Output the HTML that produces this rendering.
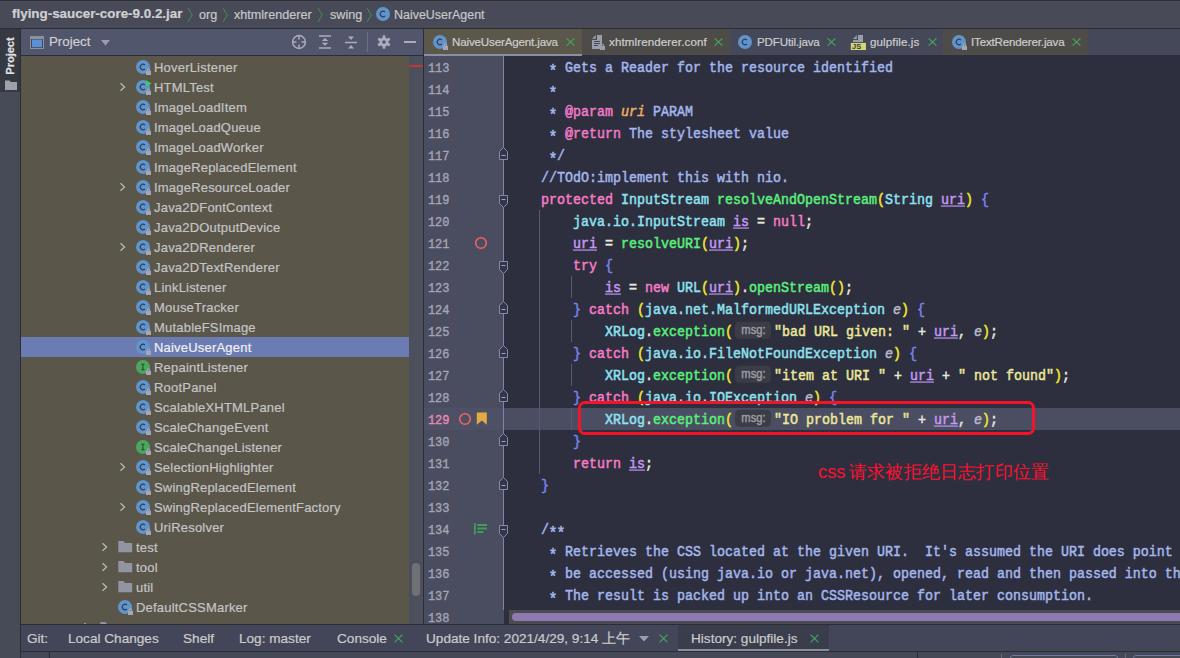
<!DOCTYPE html><html><head><meta charset="utf-8"><style>
*{margin:0;padding:0;box-sizing:border-box}
html,body{width:1180px;height:658px;overflow:hidden;background:#2d2f3e;font-family:"Liberation Sans", sans-serif}
.a{position:absolute}
.t{position:absolute;white-space:pre;font-family:"Liberation Sans", sans-serif;color:#c4c4c6;-webkit-text-stroke:0.2px currentColor}
.code{position:absolute;left:509px;white-space:pre;font-family:"Liberation Mono", monospace;font-size:13.33px;line-height:22px;height:22px;color:#a4b6ec;transform:translateY(2.5px) scaleY(1.13);transform-origin:0 15px;-webkit-text-stroke:0.45px currentColor}
.ln{position:absolute;left:424px;width:25.5px;text-align:right;white-space:pre;font-family:"Liberation Mono", monospace;font-size:12px;line-height:22px;color:#a3a5b4;-webkit-text-stroke:0.35px currentColor;transform:translateY(2.4px) scaleY(1.14);transform-origin:0 15px}
.kw{color:#f97cc6} .ty{color:#8ee2f0} .fn{color:#5aef7c} .pr{color:#f0e82a} .br{color:#7b84ee}
.va{color:#c59af5;text-decoration:underline;text-decoration-thickness:1px;text-underline-offset:1px}
.op{color:#e6e6dc} .st{color:#ece89a} .pe{color:#b8b8cc;font-style:italic} .cm{color:#a4b6ec}
.tg{color:#f27ac6} .as{display:inline-block;width:8px;transform:translateY(2.6px) scale(1.12);transform-origin:50% 8px} .dp{color:#f0b060;font-style:italic}
.hint{display:inline-block;position:relative;width:41px;height:22px;vertical-align:top}
.hint i{position:absolute;left:2.5px;top:0.6px;width:36px;height:15.6px;border-radius:4px;background:#3b3d46;color:#9a9aa0;font-style:normal;font-family:"Liberation Sans", sans-serif;font-size:11.2px;line-height:15.6px;text-align:center}
.x{position:absolute}
</style></head><body>

<div class="a" style="left:0;top:0;width:1180px;height:28px;background:#484b57"></div>
<div class="a" style="left:0;top:0;width:1180px;height:1px;background:#2e3038"></div>
<div class="t" style="left:12px;top:5px;font-size:13.4px;font-weight:bold;letter-spacing:0px;line-height:18px;color:#cfd0d2">flying-saucer-core-9.0.2.jar</div>
<svg style="position:absolute;left:187px;top:7px" width="7" height="16" viewBox="0 0 7 16"><path d="M1 1L5.2 8L1 15" stroke="#3b9150" stroke-width="0.95" fill="none"/></svg>
<div class="t" style="left:199px;top:6px;font-size:12.6px;line-height:18px;color:#c6c7ca">org</div>
<svg style="position:absolute;left:222px;top:7px" width="7" height="16" viewBox="0 0 7 16"><path d="M1 1L5.2 8L1 15" stroke="#3b9150" stroke-width="0.95" fill="none"/></svg>
<div class="t" style="left:234px;top:6px;font-size:12.6px;line-height:18px;color:#c6c7ca">xhtmlrenderer</div>
<svg style="position:absolute;left:317px;top:7px" width="7" height="16" viewBox="0 0 7 16"><path d="M1 1L5.2 8L1 15" stroke="#3b9150" stroke-width="0.95" fill="none"/></svg>
<div class="t" style="left:330px;top:6px;font-size:12.6px;line-height:18px;color:#c6c7ca">swing</div>
<svg style="position:absolute;left:366px;top:7px" width="7" height="16" viewBox="0 0 7 16"><path d="M1 1L5.2 8L1 15" stroke="#3b9150" stroke-width="0.95" fill="none"/></svg>
<svg style="position:absolute;left:376px;top:7px" width="14" height="14" viewBox="0 0 14 14"><circle cx="7" cy="7" r="7" fill="#6094cb"/><path d="M8.9 5.0A2.75 2.75 0 1 0 8.9 9.0" stroke="#323d57" stroke-width="1.15" fill="none"/></svg>
<div class="t" style="left:394px;top:6px;font-size:12.45px;line-height:18px;color:#c6c7ca">NaiveUserAgent</div>
<div class="a" style="left:0;top:28px;width:20px;height:630px;background:#474b57"></div>
<div class="a" style="left:0;top:28px;width:20px;height:64px;background:#363941"></div>
<div class="t" style="left:-16px;top:49px;width:52px;height:14px;font-size:11.2px;font-weight:bold;letter-spacing:-0.1px;line-height:14px;color:#e2e2e4;transform:rotate(-90deg);text-align:center">Project</div>
<svg style="position:absolute;left:5px;top:80px" width="12" height="10" viewBox="0 0 12 10"><path d="M0 0.5h4.5l1.3 1.6h6.2v7.9h-12z" fill="#9ea1aa"/></svg>
<div class="a" style="left:21px;top:28px;width:402px;height:27px;background:#52566d"></div>
<div class="a" style="left:21px;top:55px;width:402px;height:1px;background:#2b2d35"></div>
<svg style="position:absolute;left:30px;top:36px" width="14" height="13" viewBox="0 0 14 13"><rect x="0.5" y="0.5" width="13" height="12" fill="#454857" stroke="#8d909c" stroke-width="1"/><rect x="0.5" y="0.5" width="13" height="2.6" fill="#8d909c"/><rect x="2" y="3.6" width="10" height="7.6" fill="#5a8fd3"/></svg>
<div class="t" style="left:49px;top:33px;font-size:13.3px;line-height:18px;color:#cfd0d4">Project</div>
<svg style="position:absolute;left:101px;top:40px" width="9" height="6" viewBox="0 0 9 6"><path d="M0 0h9L4.5 5.5z" fill="#9a9db0"/></svg>
<svg style="position:absolute;left:291px;top:34px" width="16" height="16" viewBox="0 0 16 16"><circle cx="8" cy="8" r="6.4" stroke="#a9acb9" stroke-width="1.5" fill="none"/><path d="M8 1v4.5M8 10.5V15M1 8h4.5M10.5 8H15" stroke="#a9acb9" stroke-width="1.5"/></svg>
<svg style="position:absolute;left:318px;top:35px" width="14" height="15" viewBox="0 0 14 15"><path d="M1 1h12M1 13h12" stroke="#a9acb9" stroke-width="1.5"/><path d="M3.8 5.9L7 2.9L10.2 5.9zM3.8 7.7L7 10.7L10.2 7.7z" fill="#a9acb9"/></svg>
<svg style="position:absolute;left:344px;top:35px" width="14" height="15" viewBox="0 0 14 15"><path d="M1 7.5h12" stroke="#a9acb9" stroke-width="1.5"/><path d="M4 1.5L7 5L10 1.5zM4 13.5L7 10L10 13.5z" fill="#a9acb9"/></svg>
<div class="a" style="left:367px;top:32px;width:1px;height:20px;background:#6b6f82"></div>
<svg style="position:absolute;left:377px;top:35px" width="14" height="14" viewBox="0 0 14 14"><g fill="#a9acb9"><circle cx="7" cy="7" r="4.6"/><rect x="5.6" y="0.3" width="2.8" height="13.4" rx="0.6"/><rect x="5.6" y="0.3" width="2.8" height="13.4" rx="0.6" transform="rotate(60 7 7)"/><rect x="5.6" y="0.3" width="2.8" height="13.4" rx="0.6" transform="rotate(120 7 7)"/></g><circle cx="7" cy="7" r="1.8" fill="#52566d"/></svg>
<div class="a" style="left:404px;top:41px;width:12px;height:2px;background:#a9acb9"></div>
<div class="a" style="left:21px;top:56px;width:388px;height:568px;background:#5a5649"></div>
<div class="a" style="left:409px;top:56px;width:14px;height:568px;background:#4c505c"></div>
<div class="a" style="left:409px;top:65px;width:14px;height:2px;background:#c8342f"></div>
<div class="a" style="left:412px;top:563px;width:8px;height:33px;border-radius:4px;background:#6f7177"></div>
<svg style="position:absolute;left:136px;top:60px" width="17" height="17" viewBox="0 0 17 17"><circle cx="7" cy="7" r="7" fill="#6094cb"/><path d="M8.9 5.0A2.75 2.75 0 1 0 8.9 9.0" stroke="#323d57" stroke-width="1.15" fill="none"/><path d="M11.3 11.2v-1.3a1.2 1.2 0 0 1 2.4 0v1.3" stroke="#a4a6b2" stroke-width="1.1" fill="none"/><rect x="10" y="11" width="5" height="4" fill="#a4a6b2"/></svg>
<div class="t" style="left:154px;top:59px;font-size:13px;letter-spacing:0.2px;line-height:18px;color:#c4c4c6">HoverListener</div>
<svg style="position:absolute;left:119px;top:82px" width="8" height="10" viewBox="0 0 8 10"><path d="M1.5 1.2L5.6 5L1.5 8.8" stroke="#b9bbc0" stroke-width="1.2" fill="none"/></svg>
<svg style="position:absolute;left:136px;top:80px" width="17" height="17" viewBox="0 0 17 17"><circle cx="7" cy="7" r="7" fill="#6094cb"/><path d="M8.9 5.0A2.75 2.75 0 1 0 8.9 9.0" stroke="#323d57" stroke-width="1.15" fill="none"/><path d="M11.3 11.2v-1.3a1.2 1.2 0 0 1 2.4 0v1.3" stroke="#a4a6b2" stroke-width="1.1" fill="none"/><rect x="10" y="11" width="5" height="4" fill="#a4a6b2"/><path d="M10 0.3L15.5 3.4L10 6.5Z" fill="#3fcf5a"/></svg>
<div class="t" style="left:154px;top:79px;font-size:13px;letter-spacing:0.2px;line-height:18px;color:#c4c4c6">HTMLTest</div>
<svg style="position:absolute;left:136px;top:100px" width="17" height="17" viewBox="0 0 17 17"><circle cx="7" cy="7" r="7" fill="#6094cb"/><path d="M8.9 5.0A2.75 2.75 0 1 0 8.9 9.0" stroke="#323d57" stroke-width="1.15" fill="none"/><path d="M11.3 11.2v-1.3a1.2 1.2 0 0 1 2.4 0v1.3" stroke="#a4a6b2" stroke-width="1.1" fill="none"/><rect x="10" y="11" width="5" height="4" fill="#a4a6b2"/></svg>
<div class="t" style="left:154px;top:99px;font-size:13px;letter-spacing:0.2px;line-height:18px;color:#c4c4c6">ImageLoadItem</div>
<svg style="position:absolute;left:136px;top:120px" width="17" height="17" viewBox="0 0 17 17"><circle cx="7" cy="7" r="7" fill="#6094cb"/><path d="M8.9 5.0A2.75 2.75 0 1 0 8.9 9.0" stroke="#323d57" stroke-width="1.15" fill="none"/><path d="M11.3 11.2v-1.3a1.2 1.2 0 0 1 2.4 0v1.3" stroke="#a4a6b2" stroke-width="1.1" fill="none"/><rect x="10" y="11" width="5" height="4" fill="#a4a6b2"/></svg>
<div class="t" style="left:154px;top:119px;font-size:13px;letter-spacing:0.2px;line-height:18px;color:#c4c4c6">ImageLoadQueue</div>
<svg style="position:absolute;left:136px;top:140px" width="17" height="17" viewBox="0 0 17 17"><circle cx="7" cy="7" r="7" fill="#6094cb"/><path d="M8.9 5.0A2.75 2.75 0 1 0 8.9 9.0" stroke="#323d57" stroke-width="1.15" fill="none"/><path d="M11.3 11.2v-1.3a1.2 1.2 0 0 1 2.4 0v1.3" stroke="#a4a6b2" stroke-width="1.1" fill="none"/><rect x="10" y="11" width="5" height="4" fill="#a4a6b2"/></svg>
<div class="t" style="left:154px;top:139px;font-size:13px;letter-spacing:0.2px;line-height:18px;color:#c4c4c6">ImageLoadWorker</div>
<svg style="position:absolute;left:136px;top:160px" width="17" height="17" viewBox="0 0 17 17"><circle cx="7" cy="7" r="7" fill="#6094cb"/><path d="M8.9 5.0A2.75 2.75 0 1 0 8.9 9.0" stroke="#323d57" stroke-width="1.15" fill="none"/><path d="M11.3 11.2v-1.3a1.2 1.2 0 0 1 2.4 0v1.3" stroke="#a4a6b2" stroke-width="1.1" fill="none"/><rect x="10" y="11" width="5" height="4" fill="#a4a6b2"/></svg>
<div class="t" style="left:154px;top:159px;font-size:13px;letter-spacing:0.2px;line-height:18px;color:#c4c4c6">ImageReplacedElement</div>
<svg style="position:absolute;left:119px;top:182px" width="8" height="10" viewBox="0 0 8 10"><path d="M1.5 1.2L5.6 5L1.5 8.8" stroke="#b9bbc0" stroke-width="1.2" fill="none"/></svg>
<svg style="position:absolute;left:136px;top:180px" width="17" height="17" viewBox="0 0 17 17"><circle cx="7" cy="7" r="7" fill="#6094cb"/><path d="M8.9 5.0A2.75 2.75 0 1 0 8.9 9.0" stroke="#323d57" stroke-width="1.15" fill="none"/><path d="M11.3 11.2v-1.3a1.2 1.2 0 0 1 2.4 0v1.3" stroke="#a4a6b2" stroke-width="1.1" fill="none"/><rect x="10" y="11" width="5" height="4" fill="#a4a6b2"/></svg>
<div class="t" style="left:154px;top:179px;font-size:13px;letter-spacing:0.2px;line-height:18px;color:#c4c4c6">ImageResourceLoader</div>
<svg style="position:absolute;left:136px;top:200px" width="17" height="17" viewBox="0 0 17 17"><circle cx="7" cy="7" r="7" fill="#6094cb"/><path d="M8.9 5.0A2.75 2.75 0 1 0 8.9 9.0" stroke="#323d57" stroke-width="1.15" fill="none"/><path d="M11.3 11.2v-1.3a1.2 1.2 0 0 1 2.4 0v1.3" stroke="#a4a6b2" stroke-width="1.1" fill="none"/><rect x="10" y="11" width="5" height="4" fill="#a4a6b2"/></svg>
<div class="t" style="left:154px;top:199px;font-size:13px;letter-spacing:0.2px;line-height:18px;color:#c4c4c6">Java2DFontContext</div>
<svg style="position:absolute;left:136px;top:220px" width="17" height="17" viewBox="0 0 17 17"><circle cx="7" cy="7" r="7" fill="#6094cb"/><path d="M8.9 5.0A2.75 2.75 0 1 0 8.9 9.0" stroke="#323d57" stroke-width="1.15" fill="none"/><path d="M11.3 11.2v-1.3a1.2 1.2 0 0 1 2.4 0v1.3" stroke="#a4a6b2" stroke-width="1.1" fill="none"/><rect x="10" y="11" width="5" height="4" fill="#a4a6b2"/></svg>
<div class="t" style="left:154px;top:219px;font-size:13px;letter-spacing:0.2px;line-height:18px;color:#c4c4c6">Java2DOutputDevice</div>
<svg style="position:absolute;left:119px;top:242px" width="8" height="10" viewBox="0 0 8 10"><path d="M1.5 1.2L5.6 5L1.5 8.8" stroke="#b9bbc0" stroke-width="1.2" fill="none"/></svg>
<svg style="position:absolute;left:136px;top:240px" width="17" height="17" viewBox="0 0 17 17"><circle cx="7" cy="7" r="7" fill="#6094cb"/><path d="M8.9 5.0A2.75 2.75 0 1 0 8.9 9.0" stroke="#323d57" stroke-width="1.15" fill="none"/><path d="M11.3 11.2v-1.3a1.2 1.2 0 0 1 2.4 0v1.3" stroke="#a4a6b2" stroke-width="1.1" fill="none"/><rect x="10" y="11" width="5" height="4" fill="#a4a6b2"/></svg>
<div class="t" style="left:154px;top:239px;font-size:13px;letter-spacing:0.2px;line-height:18px;color:#c4c4c6">Java2DRenderer</div>
<svg style="position:absolute;left:136px;top:260px" width="17" height="17" viewBox="0 0 17 17"><circle cx="7" cy="7" r="7" fill="#6094cb"/><path d="M8.9 5.0A2.75 2.75 0 1 0 8.9 9.0" stroke="#323d57" stroke-width="1.15" fill="none"/><path d="M11.3 11.2v-1.3a1.2 1.2 0 0 1 2.4 0v1.3" stroke="#a4a6b2" stroke-width="1.1" fill="none"/><rect x="10" y="11" width="5" height="4" fill="#a4a6b2"/></svg>
<div class="t" style="left:154px;top:259px;font-size:13px;letter-spacing:0.2px;line-height:18px;color:#c4c4c6">Java2DTextRenderer</div>
<svg style="position:absolute;left:136px;top:280px" width="17" height="17" viewBox="0 0 17 17"><circle cx="7" cy="7" r="7" fill="#6094cb"/><path d="M8.9 5.0A2.75 2.75 0 1 0 8.9 9.0" stroke="#323d57" stroke-width="1.15" fill="none"/><path d="M11.3 11.2v-1.3a1.2 1.2 0 0 1 2.4 0v1.3" stroke="#a4a6b2" stroke-width="1.1" fill="none"/><rect x="10" y="11" width="5" height="4" fill="#a4a6b2"/></svg>
<div class="t" style="left:154px;top:279px;font-size:13px;letter-spacing:0.2px;line-height:18px;color:#c4c4c6">LinkListener</div>
<svg style="position:absolute;left:136px;top:300px" width="17" height="17" viewBox="0 0 17 17"><circle cx="7" cy="7" r="7" fill="#6094cb"/><path d="M8.9 5.0A2.75 2.75 0 1 0 8.9 9.0" stroke="#323d57" stroke-width="1.15" fill="none"/><path d="M11.3 11.2v-1.3a1.2 1.2 0 0 1 2.4 0v1.3" stroke="#a4a6b2" stroke-width="1.1" fill="none"/><rect x="10" y="11" width="5" height="4" fill="#a4a6b2"/></svg>
<div class="t" style="left:154px;top:299px;font-size:13px;letter-spacing:0.2px;line-height:18px;color:#c4c4c6">MouseTracker</div>
<svg style="position:absolute;left:136px;top:320px" width="17" height="17" viewBox="0 0 17 17"><circle cx="7" cy="7" r="7" fill="#6094cb"/><path d="M8.9 5.0A2.75 2.75 0 1 0 8.9 9.0" stroke="#323d57" stroke-width="1.15" fill="none"/><path d="M11.3 11.2v-1.3a1.2 1.2 0 0 1 2.4 0v1.3" stroke="#a4a6b2" stroke-width="1.1" fill="none"/><rect x="10" y="11" width="5" height="4" fill="#a4a6b2"/></svg>
<div class="t" style="left:154px;top:319px;font-size:13px;letter-spacing:0.2px;line-height:18px;color:#c4c4c6">MutableFSImage</div>
<div class="a" style="left:21px;top:337px;width:388px;height:20px;background:#6b7cb3"></div>
<svg style="position:absolute;left:136px;top:340px" width="17" height="17" viewBox="0 0 17 17"><circle cx="7" cy="7" r="7" fill="#6094cb"/><path d="M8.9 5.0A2.75 2.75 0 1 0 8.9 9.0" stroke="#323d57" stroke-width="1.15" fill="none"/><path d="M11.3 11.2v-1.3a1.2 1.2 0 0 1 2.4 0v1.3" stroke="#a4a6b2" stroke-width="1.1" fill="none"/><rect x="10" y="11" width="5" height="4" fill="#a4a6b2"/></svg>
<div class="t" style="left:154px;top:339px;font-size:13px;letter-spacing:0.2px;line-height:18px;color:#f0f0f2">NaiveUserAgent</div>
<svg style="position:absolute;left:136px;top:360px" width="17" height="17" viewBox="0 0 17 17"><circle cx="7" cy="7" r="7" fill="#4da65e"/><path d="M5.3 4.3h3.2M6.9 4.3v5.4M5.3 9.7h3.2" stroke="#2c4a33" stroke-width="1.1" fill="none"/><path d="M11.3 11.2v-1.3a1.2 1.2 0 0 1 2.4 0v1.3" stroke="#a4a6b2" stroke-width="1.1" fill="none"/><rect x="10" y="11" width="5" height="4" fill="#a4a6b2"/></svg>
<div class="t" style="left:154px;top:359px;font-size:13px;letter-spacing:0.2px;line-height:18px;color:#c4c4c6">RepaintListener</div>
<svg style="position:absolute;left:136px;top:380px" width="17" height="17" viewBox="0 0 17 17"><circle cx="7" cy="7" r="7" fill="#6094cb"/><path d="M8.9 5.0A2.75 2.75 0 1 0 8.9 9.0" stroke="#323d57" stroke-width="1.15" fill="none"/><path d="M11.3 11.2v-1.3a1.2 1.2 0 0 1 2.4 0v1.3" stroke="#a4a6b2" stroke-width="1.1" fill="none"/><rect x="10" y="11" width="5" height="4" fill="#a4a6b2"/></svg>
<div class="t" style="left:154px;top:379px;font-size:13px;letter-spacing:0.2px;line-height:18px;color:#c4c4c6">RootPanel</div>
<svg style="position:absolute;left:136px;top:400px" width="17" height="17" viewBox="0 0 17 17"><circle cx="7" cy="7" r="7" fill="#6094cb"/><path d="M8.9 5.0A2.75 2.75 0 1 0 8.9 9.0" stroke="#323d57" stroke-width="1.15" fill="none"/><path d="M11.3 11.2v-1.3a1.2 1.2 0 0 1 2.4 0v1.3" stroke="#a4a6b2" stroke-width="1.1" fill="none"/><rect x="10" y="11" width="5" height="4" fill="#a4a6b2"/></svg>
<div class="t" style="left:154px;top:399px;font-size:13px;letter-spacing:0.2px;line-height:18px;color:#c4c4c6">ScalableXHTMLPanel</div>
<svg style="position:absolute;left:136px;top:420px" width="17" height="17" viewBox="0 0 17 17"><circle cx="7" cy="7" r="7" fill="#6094cb"/><path d="M8.9 5.0A2.75 2.75 0 1 0 8.9 9.0" stroke="#323d57" stroke-width="1.15" fill="none"/><path d="M11.3 11.2v-1.3a1.2 1.2 0 0 1 2.4 0v1.3" stroke="#a4a6b2" stroke-width="1.1" fill="none"/><rect x="10" y="11" width="5" height="4" fill="#a4a6b2"/></svg>
<div class="t" style="left:154px;top:419px;font-size:13px;letter-spacing:0.2px;line-height:18px;color:#c4c4c6">ScaleChangeEvent</div>
<svg style="position:absolute;left:136px;top:440px" width="17" height="17" viewBox="0 0 17 17"><circle cx="7" cy="7" r="7" fill="#4da65e"/><path d="M5.3 4.3h3.2M6.9 4.3v5.4M5.3 9.7h3.2" stroke="#2c4a33" stroke-width="1.1" fill="none"/><path d="M11.3 11.2v-1.3a1.2 1.2 0 0 1 2.4 0v1.3" stroke="#a4a6b2" stroke-width="1.1" fill="none"/><rect x="10" y="11" width="5" height="4" fill="#a4a6b2"/></svg>
<div class="t" style="left:154px;top:439px;font-size:13px;letter-spacing:0.2px;line-height:18px;color:#c4c4c6">ScaleChangeListener</div>
<svg style="position:absolute;left:119px;top:462px" width="8" height="10" viewBox="0 0 8 10"><path d="M1.5 1.2L5.6 5L1.5 8.8" stroke="#b9bbc0" stroke-width="1.2" fill="none"/></svg>
<svg style="position:absolute;left:136px;top:460px" width="17" height="17" viewBox="0 0 17 17"><circle cx="7" cy="7" r="7" fill="#6094cb"/><path d="M8.9 5.0A2.75 2.75 0 1 0 8.9 9.0" stroke="#323d57" stroke-width="1.15" fill="none"/><path d="M11.3 11.2v-1.3a1.2 1.2 0 0 1 2.4 0v1.3" stroke="#a4a6b2" stroke-width="1.1" fill="none"/><rect x="10" y="11" width="5" height="4" fill="#a4a6b2"/></svg>
<div class="t" style="left:154px;top:459px;font-size:13px;letter-spacing:0.2px;line-height:18px;color:#c4c4c6">SelectionHighlighter</div>
<svg style="position:absolute;left:136px;top:480px" width="17" height="17" viewBox="0 0 17 17"><circle cx="7" cy="7" r="7" fill="#6094cb"/><path d="M8.9 5.0A2.75 2.75 0 1 0 8.9 9.0" stroke="#323d57" stroke-width="1.15" fill="none"/><path d="M11.3 11.2v-1.3a1.2 1.2 0 0 1 2.4 0v1.3" stroke="#a4a6b2" stroke-width="1.1" fill="none"/><rect x="10" y="11" width="5" height="4" fill="#a4a6b2"/></svg>
<div class="t" style="left:154px;top:479px;font-size:13px;letter-spacing:0.2px;line-height:18px;color:#c4c4c6">SwingReplacedElement</div>
<svg style="position:absolute;left:119px;top:502px" width="8" height="10" viewBox="0 0 8 10"><path d="M1.5 1.2L5.6 5L1.5 8.8" stroke="#b9bbc0" stroke-width="1.2" fill="none"/></svg>
<svg style="position:absolute;left:136px;top:500px" width="17" height="17" viewBox="0 0 17 17"><circle cx="7" cy="7" r="7" fill="#6094cb"/><path d="M8.9 5.0A2.75 2.75 0 1 0 8.9 9.0" stroke="#323d57" stroke-width="1.15" fill="none"/><path d="M11.3 11.2v-1.3a1.2 1.2 0 0 1 2.4 0v1.3" stroke="#a4a6b2" stroke-width="1.1" fill="none"/><rect x="10" y="11" width="5" height="4" fill="#a4a6b2"/></svg>
<div class="t" style="left:154px;top:499px;font-size:13px;letter-spacing:0.2px;line-height:18px;color:#c4c4c6">SwingReplacedElementFactory</div>
<svg style="position:absolute;left:136px;top:520px" width="17" height="17" viewBox="0 0 17 17"><circle cx="7" cy="7" r="7" fill="#6094cb"/><path d="M8.9 5.0A2.75 2.75 0 1 0 8.9 9.0" stroke="#323d57" stroke-width="1.15" fill="none"/><path d="M11.3 11.2v-1.3a1.2 1.2 0 0 1 2.4 0v1.3" stroke="#a4a6b2" stroke-width="1.1" fill="none"/><rect x="10" y="11" width="5" height="4" fill="#a4a6b2"/></svg>
<div class="t" style="left:154px;top:519px;font-size:13px;letter-spacing:0.2px;line-height:18px;color:#c4c4c6">UriResolver</div>
<svg style="position:absolute;left:101px;top:542px" width="8" height="10" viewBox="0 0 8 10"><path d="M1.5 1.2L5.6 5L1.5 8.8" stroke="#b9bbc0" stroke-width="1.2" fill="none"/></svg>
<svg style="position:absolute;left:118px;top:540px" width="15" height="13" viewBox="0 0 15 13"><path d="M0.3 1h5.2l1.6 1.9h7.1v9.3H0.3z" fill="#9295a1"/></svg>
<div class="t" style="left:136px;top:539px;font-size:13px;letter-spacing:0.2px;line-height:18px">test</div>
<svg style="position:absolute;left:101px;top:562px" width="8" height="10" viewBox="0 0 8 10"><path d="M1.5 1.2L5.6 5L1.5 8.8" stroke="#b9bbc0" stroke-width="1.2" fill="none"/></svg>
<svg style="position:absolute;left:118px;top:560px" width="15" height="13" viewBox="0 0 15 13"><path d="M0.3 1h5.2l1.6 1.9h7.1v9.3H0.3z" fill="#9295a1"/></svg>
<div class="t" style="left:136px;top:559px;font-size:13px;letter-spacing:0.2px;line-height:18px">tool</div>
<svg style="position:absolute;left:101px;top:582px" width="8" height="10" viewBox="0 0 8 10"><path d="M1.5 1.2L5.6 5L1.5 8.8" stroke="#b9bbc0" stroke-width="1.2" fill="none"/></svg>
<svg style="position:absolute;left:118px;top:580px" width="15" height="13" viewBox="0 0 15 13"><path d="M0.3 1h5.2l1.6 1.9h7.1v9.3H0.3z" fill="#9295a1"/></svg>
<div class="t" style="left:136px;top:579px;font-size:13px;letter-spacing:0.2px;line-height:18px">util</div>
<svg style="position:absolute;left:118px;top:600px" width="17" height="17" viewBox="0 0 17 17"><circle cx="7" cy="7" r="7" fill="#6094cb"/><path d="M8.9 5.0A2.75 2.75 0 1 0 8.9 9.0" stroke="#323d57" stroke-width="1.15" fill="none"/><path d="M11.3 11.2v-1.3a1.2 1.2 0 0 1 2.4 0v1.3" stroke="#a4a6b2" stroke-width="1.1" fill="none"/><rect x="10" y="11" width="5" height="4" fill="#a4a6b2"/></svg>
<div class="t" style="left:136px;top:599px;font-size:13px;letter-spacing:0.2px;line-height:18px">DefaultCSSMarker</div>
<svg style="position:absolute;left:83px;top:622px" width="8" height="10" viewBox="0 0 8 10"><path d="M1.5 1.2L5.6 5L1.5 8.8" stroke="#b9bbc0" stroke-width="1.2" fill="none"/></svg>
<svg style="position:absolute;left:100px;top:621px" width="15" height="13" viewBox="0 0 15 13"><path d="M0.3 1h5.2l1.6 1.9h7.1v9.3H0.3z" fill="#9295a1"/></svg>
<div class="a" style="left:21px;top:624px;width:1159px;height:1px;background:#2b2d35"></div>
<div class="a" style="left:424px;top:28px;width:756px;height:27px;background:#454858"></div>
<div class="a" style="left:424px;top:28px;width:158px;height:27px;background:#5b574a"></div><svg style="position:absolute;left:433px;top:35px" width="17" height="17" viewBox="0 0 17 17"><circle cx="7" cy="7" r="7" fill="#6094cb"/><path d="M8.9 5.0A2.75 2.75 0 1 0 8.9 9.0" stroke="#323d57" stroke-width="1.15" fill="none"/><path d="M11.3 11.2v-1.3a1.2 1.2 0 0 1 2.4 0v1.3" stroke="#a4a6b2" stroke-width="1.1" fill="none"/><rect x="10" y="11" width="5" height="4" fill="#a4a6b2"/></svg><div class="t" style="left:452px;top:34px;font-size:11.6px;letter-spacing:-0.16px;line-height:16px;color:#cdcdcf">NaiveUserAgent.java</div><svg style="position:absolute;left:566px;top:38px" width="9" height="8" viewBox="0 0 9 8"><path d="M0.6 0.4L8.4 7.6M8.4 0.4L0.6 7.6" stroke="#46a35a" stroke-width="1.2"/></svg>
<div class="a" style="left:424px;top:54px;width:158px;height:2px;background:#8a8fa3"></div>
<div class="a" style="left:582px;top:28px;width:148px;height:27px;background:#4e4c49"></div><svg style="position:absolute;left:586px;top:30px" width="22" height="22" viewBox="0 0 22 22"><path d="M6 8.7L9.7 5V8.7Z" fill="#9a9eaa"/><path d="M11 5H16V19H6V10H11Z" fill="#9a9eaa"/><path d="M8 11.5h6M8 13.5h6M8 15.5h4" stroke="#454856" stroke-width="1"/><path d="M15.3 16.6v-1.2a1.2 1.2 0 0 1 2.4 0v1.2" stroke="#9a9eaa" stroke-width="1.1" fill="none"/><rect x="14" y="16" width="5" height="4" fill="#9a9eaa"/></svg><div class="t" style="left:609px;top:34px;font-size:11.6px;letter-spacing:0.1px;line-height:16px;color:#cdcdcf">xhtmlrenderer.conf</div><svg style="position:absolute;left:714px;top:38px" width="9" height="8" viewBox="0 0 9 8"><path d="M0.6 0.4L8.4 7.6M8.4 0.4L0.6 7.6" stroke="#46a35a" stroke-width="1.2"/></svg>
<svg style="position:absolute;left:738px;top:35px" width="17" height="17" viewBox="0 0 17 17"><circle cx="7" cy="7" r="7" fill="#6094cb"/><path d="M8.9 5.0A2.75 2.75 0 1 0 8.9 9.0" stroke="#323d57" stroke-width="1.15" fill="none"/></svg><div class="t" style="left:757px;top:34px;font-size:11.6px;letter-spacing:-0.15px;line-height:16px;color:#cdcdcf">PDFUtil.java</div><svg style="position:absolute;left:827px;top:38px" width="9" height="8" viewBox="0 0 9 8"><path d="M0.6 0.4L8.4 7.6M8.4 0.4L0.6 7.6" stroke="#46a35a" stroke-width="1.2"/></svg>
<svg style="position:absolute;left:846px;top:30px" width="22" height="22" viewBox="0 0 22 22"><path d="M7 9L10.8 5V9Z" fill="#9a9eaa"/><path d="M12 5H17V12H7V10H12Z" fill="#9a9eaa"/><rect x="4.8" y="12.9" width="15.2" height="7.1" fill="#d2d57a"/><text x="6" y="19.3" font-family="Liberation Sans" font-weight="bold" font-size="7.5" fill="#3b3c30">JS</text></svg><div class="t" style="left:870px;top:34px;font-size:11.6px;letter-spacing:0.1px;line-height:16px;color:#cdcdcf">gulpfile.js</div><svg style="position:absolute;left:928px;top:38px" width="9" height="8" viewBox="0 0 9 8"><path d="M0.6 0.4L8.4 7.6M8.4 0.4L0.6 7.6" stroke="#46a35a" stroke-width="1.2"/></svg>
<div class="a" style="left:943px;top:28px;width:145px;height:27px;background:#4e4c49"></div><svg style="position:absolute;left:952px;top:35px" width="17" height="17" viewBox="0 0 17 17"><circle cx="7" cy="7" r="7" fill="#6094cb"/><path d="M8.9 5.0A2.75 2.75 0 1 0 8.9 9.0" stroke="#323d57" stroke-width="1.15" fill="none"/><path d="M11.3 11.2v-1.3a1.2 1.2 0 0 1 2.4 0v1.3" stroke="#a4a6b2" stroke-width="1.1" fill="none"/><rect x="10" y="11" width="5" height="4" fill="#a4a6b2"/></svg><div class="t" style="left:971px;top:34px;font-size:11.6px;letter-spacing:-0.18px;line-height:16px;color:#cdcdcf">ITextRenderer.java</div><svg style="position:absolute;left:1072px;top:38px" width="9" height="8" viewBox="0 0 9 8"><path d="M0.6 0.4L8.4 7.6M8.4 0.4L0.6 7.6" stroke="#46a35a" stroke-width="1.2"/></svg>
<div class="a" style="left:424px;top:56px;width:80px;height:568px;background:#4a4c60"></div>
<div class="a" style="left:504px;top:56px;width:676px;height:568px;background:#2d2f3e"></div>
<div class="a" style="left:504px;top:408px;width:676px;height:22px;background:#4b4e62"></div>
<div class="a" style="left:424px;top:408px;width:80px;height:22px;background:#4e5166"></div>
<div class="a" style="left:503px;top:56px;width:1px;height:554px;background:#7d84a6"></div>
<div class="a" style="left:539px;top:210px;width:1px;height:264px;background:#565a72"></div>
<div class="a" style="left:571px;top:276px;width:1px;height:22px;background:#565a72"></div>
<div class="a" style="left:571px;top:320px;width:1px;height:22px;background:#565a72"></div>
<div class="a" style="left:571px;top:364px;width:1px;height:22px;background:#565a72"></div>
<div class="a" style="left:571px;top:408px;width:1px;height:22px;background:#565a72"></div>
<div class="ln" style="top:56px;">113</div>
<div class="code" style="top:56px"><span class="cm">     <span class="as">*</span> Gets a Reader for the resource identified</span></div>
<div class="ln" style="top:78px;">114</div>
<div class="code" style="top:78px"><span class="cm">     <span class="as">*</span></span></div>
<div class="ln" style="top:100px;">115</div>
<div class="code" style="top:100px"><span class="cm">     <span class="as">*</span> </span><span class="tg">@param</span><span class="cm"> </span><span class="dp">uri</span><span class="cm"> PARAM</span></div>
<div class="ln" style="top:122px;">116</div>
<div class="code" style="top:122px"><span class="cm">     <span class="as">*</span> </span><span class="tg">@return</span><span class="cm"> The stylesheet value</span></div>
<div class="ln" style="top:144px;">117</div>
<div class="code" style="top:144px"><span class="cm">     <span class="as">*</span>/</span></div>
<div class="ln" style="top:166px;">118</div>
<div class="code" style="top:166px"><span class="cm">    //TOdO:implement this with nio.</span></div>
<div class="ln" style="top:188px;">119</div>
<div class="code" style="top:188px">    <span class="kw">protected</span> <span class="ty">InputStream</span> <span class="fn">resolveAndOpenStream</span><span class="pr">(</span><span class="ty">String</span> <span class="va">uri</span><span class="pr">)</span> <span class="br">{</span></div>
<div class="ln" style="top:210px;">120</div>
<div class="code" style="top:210px">        <span class="ty">java.io.InputStream</span> <span class="va">is</span><span class="op"> = </span><span class="kw">null</span><span class="op">;</span></div>
<div class="ln" style="top:232px;">121</div>
<div class="code" style="top:232px">        <span class="va">uri</span><span class="op"> = </span><span class="fn">resolveURI</span><span class="pr">(</span><span class="va">uri</span><span class="pr">)</span><span class="op">;</span></div>
<div class="ln" style="top:254px;">122</div>
<div class="code" style="top:254px">        <span class="kw">try</span> <span class="br">{</span></div>
<div class="ln" style="top:276px;">123</div>
<div class="code" style="top:276px">            <span class="va">is</span><span class="op"> = </span><span class="kw">new</span> <span class="ty">URL</span><span class="pr">(</span><span class="va">uri</span><span class="pr">)</span><span class="op">.</span><span class="fn">openStream</span><span class="pr">()</span><span class="op">;</span></div>
<div class="ln" style="top:298px;">124</div>
<div class="code" style="top:298px">        <span class="br">}</span> <span class="kw">catch</span> <span class="pr">(</span><span class="ty">java.net.MalformedURLException</span> <span class="pe">e</span><span class="pr">)</span> <span class="br">{</span></div>
<div class="ln" style="top:320px;">125</div>
<div class="code" style="top:320px">            <span class="ty">XRLog</span><span class="op">.</span><span class="fn">exception</span><span class="pr">(</span><span class="hint"><i>msg:</i></span><span class="st">&quot;bad URL given: &quot;</span><span class="op"> + </span><span class="va">uri</span><span class="op">, </span><span class="pe">e</span><span class="pr">)</span><span class="op">;</span></div>
<div class="ln" style="top:342px;">126</div>
<div class="code" style="top:342px">        <span class="br">}</span> <span class="kw">catch</span> <span class="pr">(</span><span class="ty">java.io.FileNotFoundException</span> <span class="pe">e</span><span class="pr">)</span> <span class="br">{</span></div>
<div class="ln" style="top:364px;">127</div>
<div class="code" style="top:364px">            <span class="ty">XRLog</span><span class="op">.</span><span class="fn">exception</span><span class="pr">(</span><span class="hint"><i>msg:</i></span><span class="st">&quot;item at URI &quot;</span><span class="op"> + </span><span class="va">uri</span><span class="op"> + </span><span class="st">&quot; not found&quot;</span><span class="pr">)</span><span class="op">;</span></div>
<div class="ln" style="top:386px;">128</div>
<div class="code" style="top:386px">        <span class="br">}</span> <span class="kw">catch</span> <span class="pr">(</span><span class="ty">java.io.IOException</span> <span class="pe">e</span><span class="pr">)</span> <span class="br">{</span></div>
<div class="ln" style="top:408px;color:#e889b5;">129</div>
<div class="code" style="top:408px">            <span class="ty">XRLog</span><span class="op">.</span><span class="fn">exception</span><span class="pr">(</span><span class="hint"><i>msg:</i></span><span class="st">&quot;IO problem for &quot;</span><span class="op"> + </span><span class="va">uri</span><span class="op">, </span><span class="pe">e</span><span class="pr">)</span><span class="op">;</span></div>
<div class="ln" style="top:430px;">130</div>
<div class="code" style="top:430px">        <span class="br">}</span></div>
<div class="ln" style="top:452px;">131</div>
<div class="code" style="top:452px">        <span class="kw">return</span> <span class="va">is</span><span class="op">;</span></div>
<div class="ln" style="top:474px;">132</div>
<div class="code" style="top:474px">    <span class="br">}</span></div>
<div class="ln" style="top:496px;">133</div>
<div class="code" style="top:496px"></div>
<div class="ln" style="top:518px;">134</div>
<div class="code" style="top:518px"><span class="cm">    /<span class="as">*</span><span class="as">*</span></span></div>
<div class="ln" style="top:540px;">135</div>
<div class="code" style="top:540px"><span class="cm">     <span class="as">*</span> Retrieves the CSS located at the given URI.  It&#x27;s assumed the URI does point</span></div>
<div class="ln" style="top:562px;">136</div>
<div class="code" style="top:562px"><span class="cm">     <span class="as">*</span> be accessed (using java.io or java.net), opened, read and then passed into th</span></div>
<div class="ln" style="top:584px;">137</div>
<div class="code" style="top:584px"><span class="cm">     <span class="as">*</span> The result is packed up into an CSSResource for later consumption.</span></div>
<div class="ln" style="top:606px;">138</div>
<div class="code" style="top:606px"></div>
<svg style="position:absolute;left:499px;top:147px" width="9" height="13" viewBox="0 0 9 13"><path d="M0.5 12.5V4.5L4.5 0.5L8.5 4.5V12.5Z" fill="#33364a" stroke="#8489a6" stroke-width="1"/><path d="M2.5 8.5H6.5" stroke="#a0a4bc" stroke-width="1"/></svg>
<svg style="position:absolute;left:499px;top:301px" width="9" height="13" viewBox="0 0 9 13"><path d="M0.5 12.5V4.5L4.5 0.5L8.5 4.5V12.5Z" fill="#33364a" stroke="#8489a6" stroke-width="1"/><path d="M2.5 8.5H6.5" stroke="#a0a4bc" stroke-width="1"/></svg>
<svg style="position:absolute;left:499px;top:345px" width="9" height="13" viewBox="0 0 9 13"><path d="M0.5 12.5V4.5L4.5 0.5L8.5 4.5V12.5Z" fill="#33364a" stroke="#8489a6" stroke-width="1"/><path d="M2.5 8.5H6.5" stroke="#a0a4bc" stroke-width="1"/></svg>
<svg style="position:absolute;left:499px;top:389px" width="9" height="13" viewBox="0 0 9 13"><path d="M0.5 12.5V4.5L4.5 0.5L8.5 4.5V12.5Z" fill="#33364a" stroke="#8489a6" stroke-width="1"/><path d="M2.5 8.5H6.5" stroke="#a0a4bc" stroke-width="1"/></svg>
<svg style="position:absolute;left:499px;top:433px" width="9" height="13" viewBox="0 0 9 13"><path d="M0.5 12.5V4.5L4.5 0.5L8.5 4.5V12.5Z" fill="#33364a" stroke="#8489a6" stroke-width="1"/><path d="M2.5 8.5H6.5" stroke="#a0a4bc" stroke-width="1"/></svg>
<svg style="position:absolute;left:499px;top:477px" width="9" height="13" viewBox="0 0 9 13"><path d="M0.5 12.5V4.5L4.5 0.5L8.5 4.5V12.5Z" fill="#33364a" stroke="#8489a6" stroke-width="1"/><path d="M2.5 8.5H6.5" stroke="#a0a4bc" stroke-width="1"/></svg>
<svg style="position:absolute;left:499px;top:195px" width="9" height="13" viewBox="0 0 9 13"><path d="M0.5 0.5H8.5V8.5L4.5 12.5L0.5 8.5Z" fill="#33364a" stroke="#8489a6" stroke-width="1"/><path d="M2.5 4.5H6.5" stroke="#a0a4bc" stroke-width="1"/></svg>
<svg style="position:absolute;left:499px;top:261px" width="9" height="13" viewBox="0 0 9 13"><path d="M0.5 0.5H8.5V8.5L4.5 12.5L0.5 8.5Z" fill="#33364a" stroke="#8489a6" stroke-width="1"/><path d="M2.5 4.5H6.5" stroke="#a0a4bc" stroke-width="1"/></svg>
<svg style="position:absolute;left:499px;top:525px" width="9" height="13" viewBox="0 0 9 13"><path d="M0.5 0.5H8.5V8.5L4.5 12.5L0.5 8.5Z" fill="#33364a" stroke="#8489a6" stroke-width="1"/><path d="M2.5 4.5H6.5" stroke="#a0a4bc" stroke-width="1"/></svg>
<svg style="position:absolute;left:474px;top:236px" width="14" height="14" viewBox="0 0 14 14"><circle cx="7" cy="7" r="5.3" stroke="#f06262" stroke-width="1.6" fill="none"/></svg>
<svg style="position:absolute;left:458px;top:412px" width="14" height="14" viewBox="0 0 14 14"><circle cx="7" cy="7" r="5.3" stroke="#f06262" stroke-width="1.6" fill="none"/></svg>
<svg style="position:absolute;left:476px;top:412px" width="11" height="13" viewBox="0 0 11 13"><path d="M0.8 0.4h10v12.4L5.8 8.6L0.8 12.8z" fill="#e3ab42"/></svg>
<svg style="position:absolute;left:474px;top:523px" width="14" height="12" viewBox="0 0 14 12"><path d="M0.9 0.2v11.4" stroke="#3f9c5a" stroke-width="1.8"/><path d="M3.3 2h9.7M3.3 5.5h9.7M3.3 9h6" stroke="#3f9c5a" stroke-width="1.8"/></svg>
<div class="a" style="left:578px;top:401px;width:457px;height:34px;border:3px solid #f5132a;border-radius:7px"></div>
<div class="t" style="left:818px;top:460px;font-size:18.3px;line-height:24px;color:#ff1030;-webkit-text-stroke:0">css<span style="margin-left:3.5px;letter-spacing:0.2px">请求被拒绝日志打印位置</span></div>
<div class="a" style="left:504px;top:610px;width:676px;height:14px;background:#2d2f3e"></div>
<div class="a" style="left:509px;top:610px;width:671px;height:14px;background:#4a4c4f"></div>
<div class="a" style="left:512px;top:613px;width:700px;height:8px;border-radius:4px;background:#8d78b2"></div>
<div class="a" style="left:21px;top:625px;width:1159px;height:26px;background:#434658"></div>
<div class="a" style="left:21px;top:651px;width:1159px;height:1px;background:#2b2d35"></div>
<div class="a" style="left:21px;top:652px;width:1159px;height:6px;background:#454857"></div>
<div class="a" style="left:49px;top:652px;width:1px;height:6px;background:#2b2d35"></div>
<div class="a" style="left:917px;top:652px;width:1px;height:6px;background:#2b2d35"></div>
<div class="a" style="left:1125px;top:654px;width:1px;height:4px;background:#6a6d7a"></div>
<div class="a" style="left:1001px;top:654px;width:1px;height:4px;background:#6a6d7a"></div>
<div class="a" style="left:1010px;top:655px;width:108px;height:10px;border:1px solid #6b7aa6;border-radius:3px"></div>
<div class="a" style="left:1133px;top:655px;width:60px;height:10px;border:1px solid #6b7aa6;border-radius:3px"></div>
<div class="a" style="left:678px;top:625px;width:151px;height:26px;background:#3a3d4c"></div>
<div class="a" style="left:678px;top:649px;width:151px;height:2px;background:#8a8e9c"></div>
<div class="t" style="left:27px;top:630px;font-size:13.6px;line-height:17px;color:#cbcbcd">Git:</div>
<div class="t" style="left:68px;top:630px;font-size:13.6px;line-height:17px;color:#cbcbcd">Local Changes</div>
<div class="t" style="left:183px;top:630px;font-size:13.6px;line-height:17px;color:#cbcbcd">Shelf</div>
<div class="t" style="left:239px;top:630px;font-size:13.6px;line-height:17px;color:#cbcbcd">Log: master</div>
<div class="t" style="left:337px;top:630px;font-size:13.6px;line-height:17px;color:#cbcbcd">Console</div>
<svg style="position:absolute;left:394px;top:634px" width="9" height="9" viewBox="0 0 9 9"><path d="M0.6 0.6L8.4 8.4M8.4 0.6L0.6 8.4" stroke="#46a35a" stroke-width="1.2"/></svg>
<div class="t" style="left:426px;top:630px;font-size:13.6px;line-height:17px;color:#cbcbcd">Update Info: 2021/4/29, 9:14 上午</div>
<svg style="position:absolute;left:639px;top:636px" width="10" height="6" viewBox="0 0 10 6"><path d="M0 0h10L5 5.5z" fill="#9a9db0"/></svg>
<svg style="position:absolute;left:659px;top:634px" width="9" height="9" viewBox="0 0 9 9"><path d="M0.6 0.6L8.4 8.4M8.4 0.6L0.6 8.4" stroke="#46a35a" stroke-width="1.2"/></svg>
<div class="t" style="left:691px;top:630px;font-size:13.6px;line-height:17px;color:#cbcbcd">History: gulpfile.js</div>
<svg style="position:absolute;left:810px;top:634px" width="9" height="9" viewBox="0 0 9 9"><path d="M0.6 0.6L8.4 8.4M8.4 0.6L0.6 8.4" stroke="#46a35a" stroke-width="1.2"/></svg>
<div class="a" style="left:0;top:28px;width:1180px;height:1px;background:#2b2d35"></div>
<div class="a" style="left:20px;top:28px;width:1px;height:630px;background:#2b2d35"></div>
<div class="a" style="left:423px;top:28px;width:1px;height:596px;background:#2b2d35"></div>
</body></html>
